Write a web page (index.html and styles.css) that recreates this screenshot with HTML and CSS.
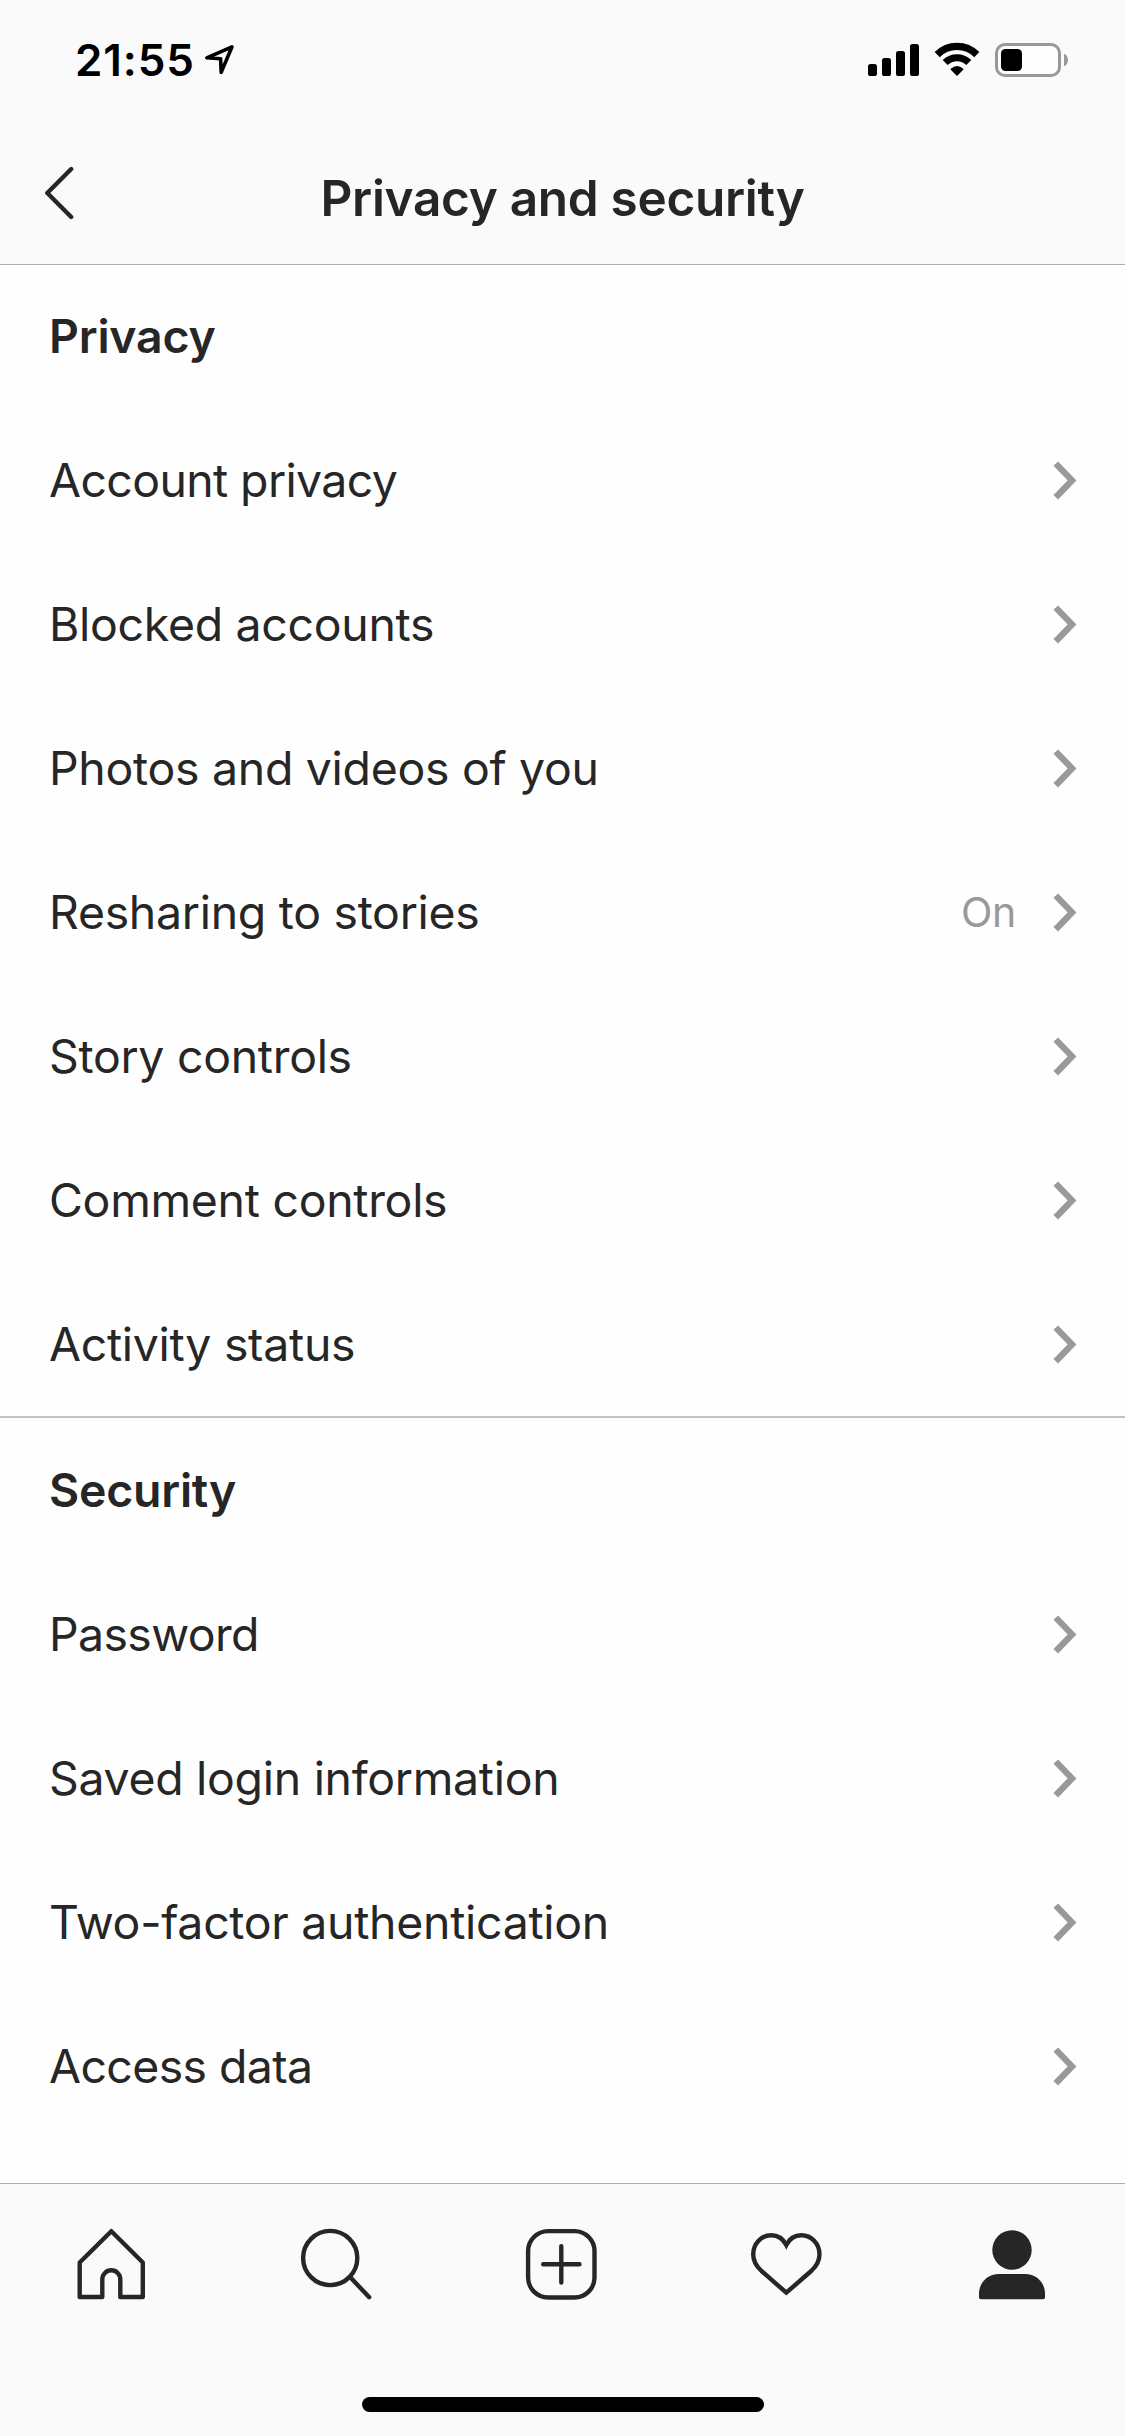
FILE: index.html
```html
<!DOCTYPE html>
<html lang="en">
<head>
    <meta charset="UTF-8">
    <meta name="viewport" content="width=device-width, initial-scale=1.0">
    <title>Privacy and security</title>
    <link rel="stylesheet" href="styles.css">
</head>
<body>

    <!-- Shared chevron for the rows -->
    <svg class="sprite" width="0" height="0">
        <symbol id="chevron" viewBox="0 0 25 40">
            <path d="M2.8 3.6 L19 20.4 L2.8 37.2" fill="none" stroke="#999" stroke-width="6.4"/>
        </symbol>
    </svg>

    <!-- Status bar and title -->
    <header class="header">
        <div class="status-bar">
            <span class="time">21:55</span>
            <svg class="location" width="32" height="32" viewBox="0 0 32 32">
                <path d="M28 2.8 L2.8 13.8 L16.6 14.7 L17.2 28.4 Z" fill="none" stroke="#000" stroke-width="3.6" stroke-linejoin="round"/>
            </svg>
            <svg class="signals" width="202" height="36" viewBox="867 42 202 36">
                <rect x="868" y="64" width="9" height="12" rx="2.6"/>
                <rect x="882" y="58" width="9" height="18" rx="2.6"/>
                <rect x="896" y="51" width="9" height="25" rx="2.6"/>
                <rect x="910" y="44" width="9" height="32" rx="2.6"/>
                <path d="M937.2 54.6 A28 28 0 0 1 976.8 54.6" fill="none" stroke="#000" stroke-width="7.2"/>
                <path d="M945.2 62.6 A16.7 16.7 0 0 1 968.8 62.6" fill="none" stroke="#000" stroke-width="7"/>
                <path d="M951.3 69.3 Q957 64.5 962.7 69.3 L957 75 Z" stroke="#000" stroke-width="1.5" stroke-linejoin="round"/>
                <rect x="996.5" y="44.5" width="63" height="31" rx="8.5" fill="#fefefe" stroke="#999" stroke-width="3"/>
                <rect x="1001" y="49" width="21" height="22" rx="4.5"/>
                <path d="M1064 53.7 Q1068 55.5 1068 60 Q1068 64.5 1064 66.3 Z" fill="#999"/>
            </svg>
        </div>
        <div class="nav-bar">
            <svg class="back" width="30" height="54" viewBox="0 0 30 54">
                <path d="M27.2 3 L3.3 27 L27.2 51" fill="none" stroke="#262626" stroke-width="4.4" stroke-linecap="round" stroke-linejoin="round"/>
            </svg>
            <h1>Privacy and security</h1>
        </div>
    </header>

    <main class="settings">
        <!-- Privacy -->
        <section class="group">
            <h2>Privacy</h2>
            <a class="row tight">Account privacy<svg class="chevron"><use href="#chevron"/></svg></a>
            <a class="row">Blocked accounts<svg class="chevron"><use href="#chevron"/></svg></a>
            <a class="row">Photos and videos of you<svg class="chevron"><use href="#chevron"/></svg></a>
            <a class="row">Resharing to stories<span class="value">On</span><svg class="chevron"><use href="#chevron"/></svg></a>
            <a class="row">Story controls<svg class="chevron"><use href="#chevron"/></svg></a>
            <a class="row">Comment controls<svg class="chevron"><use href="#chevron"/></svg></a>
            <a class="row">Activity status<svg class="chevron"><use href="#chevron"/></svg></a>
        </section>

        <!-- Security -->
        <section class="group">
            <h2>Security</h2>
            <a class="row tight">Password<svg class="chevron"><use href="#chevron"/></svg></a>
            <a class="row">Saved login information<svg class="chevron"><use href="#chevron"/></svg></a>
            <a class="row">Two-factor authentication<svg class="chevron"><use href="#chevron"/></svg></a>
            <a class="row tight">Access data<svg class="chevron"><use href="#chevron"/></svg></a>
        </section>
    </main>

    <!-- Bottom tabs -->
    <footer class="footer">
        <nav class="tabs">
            <svg viewBox="0 0 74 74">
                <path d="M36.3 3.2 L67.8 34.5 V69 H45.3 V51.3 A9 9 0 0 0 27.3 51.3 V69 H4.7 V34.5 Z"/>
            </svg>
            <svg viewBox="0 0 74 74">
                <circle cx="30.2" cy="30" r="27.1"/>
                <path d="M50.5 49.5 L69.2 69.2"/>
            </svg>
            <svg viewBox="0 0 74 74">
                <rect x="3.1" y="3.1" width="66.4" height="66.4" rx="20"/>
                <path d="M18.2 36.3 H54.5 M36.3 18.2 V54.5"/>
            </svg>
            <svg viewBox="0 0 74 74">
                <path class="heart" d="M36.3 64.7 L11.5 43 C5.5 37.5 3.2 32 3.2 26.5 C3.2 15.5 11.5 7.2 21.3 7.2 C27.8 7.2 33 10.5 36.3 17 C39.6 10.5 44.8 7.2 51.3 7.2 C61.3 7.2 69.5 15.5 69.5 26.5 C69.5 32 67.2 37.5 61.2 43 Z"/>
            </svg>
            <svg class="active" viewBox="0 0 74 74">
                <circle cx="37" cy="22" r="19.7"/>
                <path d="M4 69.3 V66 C4 54.5 12.5 46 24 46 H50 C61.5 46 70 54.5 70 66 V69.3 Q70 71.3 68 71.3 H6 Q4 71.3 4 69.3 Z"/>
            </svg>
        </nav>
        <div class="home-indicator"></div>
    </footer>

</body>
</html>
```
FILE: styles.css
```css
* {
    box-sizing: border-box;
}

body {
    margin: 0;
    height: 2436px;
    display: flex;
    flex-direction: column;
    background-color: #fefefe;
    color: #262626;
    font-family: Inter, "Liberation Sans", sans-serif;
}

.sprite {
    position: absolute;
}

/* Header */
.header {
    height: 265px;
    background-color: #fafafa;
    border-bottom: 1px solid #adadad;
}

.status-bar {
    display: flex;
    height: 132px;
    padding: 42px 56px 0 75px;
    color: #000;
}

.time {
    width: 129px;
    font-size: 44px;
    font-weight: 600;
    letter-spacing: 0.9px;
    line-height: 36px;
    white-space: nowrap;
}

.location {
    margin-top: 2px;
}

.signals {
    margin-left: auto;
}

.nav-bar {
    display: grid;
    grid-template-columns: 1fr auto 1fr;
    align-items: center;
    height: 132px;
    padding: 0 44px;
}

.back {
    margin-bottom: 10px;
}

h1 {
    margin: 0;
    font-size: 49.5px;
    font-weight: 600;
    letter-spacing: -0.3px;
    line-height: 60px;
}

/* Settings list */
.settings {
    flex: 1;
    margin-top: -1px;
}

.group + .group {
    border-top: 2px solid #c3c3c3;
}

h2,
.row {
    display: flex;
    align-items: center;
    height: 144px;
    margin: 0;
    padding: 0 47px 0 49px;
    font-size: 46.4px;
    letter-spacing: -0.28px;
}

h2 {
    font-weight: 600;
    letter-spacing: -0.2px;
}

.tight {
    letter-spacing: -0.6px;
}

.value {
    margin-left: auto;
    margin-right: 37px;
    color: #999;
    font-size: 41px;
}

.chevron {
    width: 25px;
    height: 40px;
    margin-left: auto;
}

.value + .chevron {
    margin-left: 0;
}

/* Bottom tabs */
.footer {
    height: 253px;
    background-color: #fafafa;
    border-top: 1px solid #adadad;
}

.tabs {
    display: flex;
    gap: 151px;
    padding: 44px 0 0 75px;
}

.tabs svg {
    flex: none;
    width: 74px;
    height: 74px;
    fill: none;
    stroke: #262626;
    stroke-width: 4.4;
    stroke-linecap: round;
    stroke-linejoin: round;
}

.tabs .active {
    fill: #262626;
    stroke: none;
}

.tabs .heart {
    stroke-linejoin: miter;
}

.home-indicator {
    width: 402px;
    height: 15px;
    margin: 95px auto 0 362px;
    border-radius: 7.5px;
    background-color: #000;
}
```
